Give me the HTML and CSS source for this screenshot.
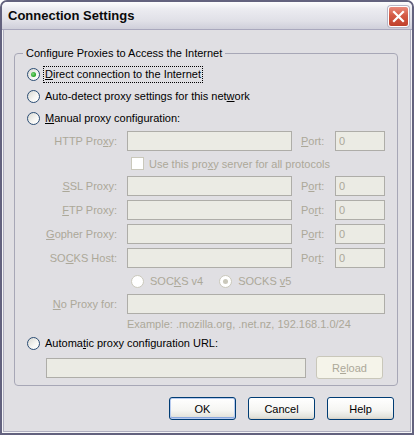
FILE: index.html
```html
<!DOCTYPE html>
<html lang="en">
<head>
    <meta charset="UTF-8">
    <title>Connection Settings</title>
    <link rel="stylesheet" href="styles.css">
</head>
<body>
    <div class="window">
        <div class="titlebar">
            <span class="title">Connection Settings</span>
            <span class="close">
                <svg width="13" height="13" viewBox="0 0 13 13">
                    <path d="M2 2 L11 11 M11 2 L2 11" stroke="#fff" stroke-width="2.2" stroke-linecap="square"/>
                </svg>
            </span>
        </div>

        <div class="client">
            <fieldset class="group">
                <legend>Configure Proxies to Access the Internet</legend>

                <div class="option">
                    <span class="radio checked"></span>
                    <span class="option-text focused"><u>D</u>irect connection to the Internet</span>
                </div>
                <div class="option">
                    <span class="radio"></span>
                    <span class="option-text">Auto-detect proxy settings for this net<u>w</u>ork</span>
                </div>
                <div class="option">
                    <span class="radio"></span>
                    <span class="option-text"><u>M</u>anual proxy configuration:</span>
                </div>

                <div class="proxy-grid">
                    <label class="lbl">HTTP Pro<u>x</u>y:</label>
                    <input class="field" type="text" disabled>
                    <label class="port-lbl"><u>P</u>ort:</label>
                    <input class="field port" type="text" value="0" disabled>

                    <div class="check-row">
                        <span class="check"></span>
                        <span>Use this pro<u>x</u>y server for all protocols</span>
                    </div>

                    <label class="lbl"><u>S</u>SL Proxy:</label>
                    <input class="field" type="text" disabled>
                    <label class="port-lbl">P<u>o</u>rt:</label>
                    <input class="field port" type="text" value="0" disabled>

                    <label class="lbl"><u>F</u>TP Proxy:</label>
                    <input class="field" type="text" disabled>
                    <label class="port-lbl">Po<u>r</u>t:</label>
                    <input class="field port" type="text" value="0" disabled>

                    <label class="lbl"><u>G</u>opher Proxy:</label>
                    <input class="field" type="text" disabled>
                    <label class="port-lbl">P<u>o</u>rt:</label>
                    <input class="field port" type="text" value="0" disabled>

                    <label class="lbl">SO<u>C</u>KS Host:</label>
                    <input class="field" type="text" disabled>
                    <label class="port-lbl">Por<u>t</u>:</label>
                    <input class="field port" type="text" value="0" disabled>

                    <div class="socks-row">
                        <span class="radio disabled"></span>
                        <span class="socks-text">SOC<u>K</u>S v4</span>
                        <span class="radio disabled checked"></span>
                        <span class="socks-text">SOCKS <u>v</u>5</span>
                    </div>

                    <label class="lbl"><u>N</u>o Proxy for:</label>
                    <input class="field wide" type="text" disabled>

                    <div class="example">Example: .mozilla.org, .net.nz, 192.168.1.0/24</div>
                </div>

                <div class="option">
                    <span class="radio"></span>
                    <span class="option-text">Automa<u>t</u>ic proxy configuration URL:</span>
                </div>
                <div class="url-row">
                    <input class="field url" type="text" disabled>
                    <button class="btn disabled" disabled>R<u>e</u>load</button>
                </div>
            </fieldset>

            <div class="buttons">
                <button class="btn default">OK</button>
                <button class="btn">Cancel</button>
                <button class="btn">Help</button>
            </div>
        </div>
    </div>
</body>
</html>
```

FILE: styles.css
```css
body {
    margin: 0;
    padding: 0;
    background: #fff;
    font-family: "Liberation Sans", Arial, sans-serif;
    font-size: 11px;
}
.window {
    width: 414px;
    height: 435px;
    box-sizing: border-box;
    border: 2px solid #63627e;
    border-radius: 7px 7px 0 0;
    background: #e0dfe3;
    display: flex;
    flex-direction: column;
    overflow: hidden;
}
.titlebar {
    height: 27px;
    flex: none;
    display: flex;
    align-items: center;
    justify-content: space-between;
    padding: 0 3px 0 6px;
    background: linear-gradient(#fdfdfe, #ececf1 25%, #e0e0e7 70%, #cfcfda);
    border-bottom: 1px solid #a9a8bd;
}
.title {
    font-size: 13px;
    font-weight: bold;
    color: #0a0a0a;
    margin-top: -1px;
}
.close {
    width: 21px;
    height: 21px;
    box-sizing: border-box;
    border: 1px solid #fff;
    border-radius: 3px;
    background: linear-gradient(#e98a7c, #d45a45 45%, #c0402c);
    box-shadow: 0 0 0 1px #b6b5c6;
    display: flex;
    align-items: center;
    justify-content: center;
    margin-top: 1px;
}
.client {
    flex: 1;
    display: flex;
    flex-direction: column;
    border: 1px solid #f6f6f8;
    border-top: none;
    box-shadow: inset 1px 0 #b0afc0, inset -1px 0 #b0afc0, inset 0 -1px #b0afc0;
}
.group {
    margin: 16px 13px 0 11px;
    padding: 3px 8px 4px 12px;
    border: 1px solid #a7a7b6;
    border-radius: 4px;
    min-width: 0;
}
.group legend {
    padding: 0 3px;
    margin-left: -4px;
    line-height: 14px;
    color: #000;
}
.option {
    height: 22px;
    display: flex;
    align-items: center;
}
.option-text {
    margin-left: 5px;
    color: #000;
}
.option-text.focused {
    margin-left: 3px;
    padding: 1px 1px 2px;
    border: 1px dotted #000;
}
.radio {
    width: 13px;
    height: 13px;
    box-sizing: border-box;
    border: 1px solid #2b4d74;
    border-radius: 50%;
    background: linear-gradient(135deg, #d8d8d2, #f7f7f4 60%, #fff);
    display: flex;
    align-items: center;
    justify-content: center;
    flex: none;
}
.radio.checked::after {
    content: "";
    width: 5px;
    height: 5px;
    border-radius: 50%;
    background: radial-gradient(circle at 40% 40%, #7fd97f, #21a121 70%);
}
.radio.disabled {
    border-color: #cac8bb;
    background: #fff;
}
.radio.disabled.checked::after {
    background: #cac8bb;
}
.proxy-grid {
    display: grid;
    grid-template-columns: 100px 174px 34px 50px;
    grid-template-rows: 24px 21px 24px 24px 24px 24px 22px 24px 16px;
    align-items: center;
    color: #aca899;
}
.lbl {
    text-align: right;
    padding-right: 10px;
}
.field {
    height: 20px;
    box-sizing: border-box;
    border: 1px solid #aeada8;
    background: #ebebe4;
    margin: 0;
    padding: 0 3px;
    font-family: inherit;
    font-size: 11px;
    color: #aca899;
    width: 165px;
}
.field.port {
    width: 50px;
}
.field.wide {
    grid-column: 2 / 5;
    width: 258px;
}
.check-row {
    grid-column: 2 / 5;
    display: flex;
    align-items: center;
    padding-left: 4px;
}
.check {
    width: 13px;
    height: 13px;
    box-sizing: border-box;
    border: 1px solid #cac8bb;
    background: #fff;
    margin-right: 5px;
}
.socks-row {
    grid-column: 2 / 5;
    display: flex;
    align-items: center;
    padding-left: 4px;
}
.socks-text {
    margin-left: 6px;
    margin-right: 16px;
}
.example {
    grid-column: 2 / 5;
    line-height: 16px;
}
.url-row {
    height: 27px;
    display: flex;
    align-items: center;
    gap: 10px;
    padding-left: 19px;
}
.field.url {
    width: 260px;
}
.btn {
    width: 67px;
    height: 23px;
    box-sizing: border-box;
    border: 1px solid #003c74;
    border-radius: 3px;
    background: linear-gradient(#fff, #f5f5f2 60%, #e3e3dc 90%, #d6d0c5);
    font-family: inherit;
    font-size: 11px;
    color: #000;
    padding: 0;
    margin: 0;
}
.btn.default {
    box-shadow: inset 0 0 0 1px #b7cbef, inset 0 -1px 0 1px #8aa7de;
}
.btn.disabled {
    border-color: #c9c7ba;
    background: #f5f4ea;
    color: #aca899;
}
.buttons {
    display: flex;
    justify-content: flex-end;
    gap: 12px;
    margin: 11px 17px 0 0;
}
```
